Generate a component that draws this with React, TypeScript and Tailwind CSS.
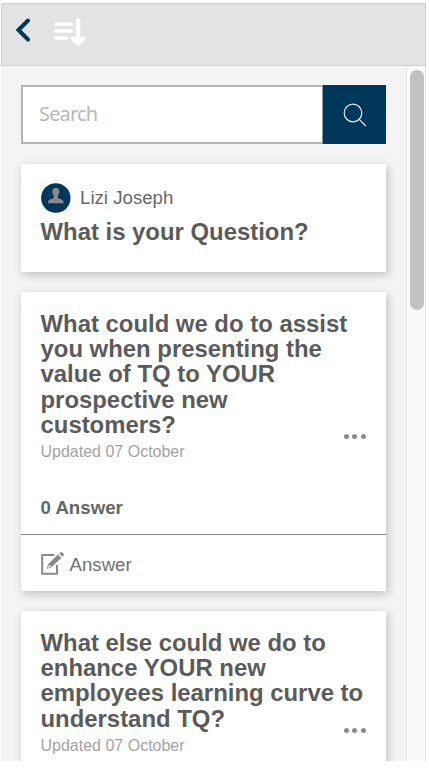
type Question = {
  title: string;
  updated: string;
  answers?: number;
};

const questions: Question[] = [
  {
    title:
      "What could we do to assist you when presenting the value of TQ to YOUR prospective new customers?",
    updated: "Updated 07 October",
    answers: 0,
  },
  {
    title:
      "What else could we do to enhance YOUR new employees learning curve to understand TQ?",
    updated: "Updated 07 October",
  },
];

function BackIcon() {
  return (
    <svg width="18" height="26" viewBox="0 0 18 26" fill="none" stroke="#00375b">
      <path d="M14 3.500L4.500 13l9.500 9.500" strokeWidth="4" strokeLinecap="round" />
    </svg>
  );
}

function SortIcon() {
  return (
    <svg width="32" height="30" viewBox="0 0 32 30" fill="none" stroke="#fff" strokeLinecap="round">
      <path d="M2 6.300h15.500M2 13h15.500M2 20h10.500" strokeWidth="3.400" />
      <path d="M24 2.500v21M19 20.500l5 4.800 5-4.800" strokeWidth="4.400" strokeLinejoin="round" />
    </svg>
  );
}

function SearchIcon() {
  return (
    <svg width="24" height="24" viewBox="0 0 24 24" fill="none" stroke="#e6ebf0" strokeWidth="1.200">
      <circle cx="10" cy="10" r="8.800" />
      <path d="M16.200 16.400l6.600 6.600" />
    </svg>
  );
}

function Avatar() {
  return (
    <svg className="shrink-0" width="30" height="30" viewBox="0 0 30 30">
      <circle cx="14.800" cy="15" r="14.700" fill="#00375b" />
      <path
        d="M14.800 5c-2.600 0-3.700 1.600-3.500 3.900.1 1.900.8 3.100 1.500 3.900v1.700c-.3.8-1.200 1.100-2.600 1.500-2.200.6-3.200 1.300-3.200 4.300h15.600c0-3-1-3.700-3.200-4.300-1.400-.4-2.300-.7-2.600-1.500v-1.700c.7-.8 1.400-2 1.500-3.900C18.500 6.600 17.400 5 14.800 5z"
        fill="#8d8989"
      />
    </svg>
  );
}

function EditIcon() {
  return (
    <svg width="24" height="25" viewBox="0 0 24 25" fill="none">
      <path d="M13.500 4H1.200V22.800H16V14" stroke="#8d8989" strokeWidth="2" />
      <path d="M5.800 18l1.400-5L17 3.600l3.400 3.500L10.400 16.300z" fill="#8d8989" />
      <path d="M7 16.700l.9-2.900 1.900 1.900z" fill="#fff" />
      <path d="M18.200 2.500l1-1c1.400-1.300 4.600 1.400 3.300 3.300l-1 1z" fill="#8d8989" />
    </svg>
  );
}

function MoreButton() {
  return (
    <button type="button" aria-label="More" className="absolute -top-2 right-0 flex gap-[3.400px]">
      <span className="size-[5.200px] rounded-full bg-[#8d8989]" />
      <span className="size-[5.200px] rounded-full bg-[#8d8989]" />
      <span className="size-[5.200px] rounded-full bg-[#8d8989]" />
    </button>
  );
}

function QuestionCard({ question }: { question: Question }) {
  return (
    <article className="mt-5 h-[299px] shrink-0 bg-white shadow-[2px_3px_9px_rgba(0,0,0,0.22)]">
      <div className="flex h-[243px] flex-col border-b border-[#8d8989] pt-[19px] pr-5 pl-[19.500px]">
        <h2 className="text-[23.900px] leading-[25.200px] font-bold text-[#5b5b5b]">{question.title}</h2>
        <div className="relative mt-[5px]">
          <p className="text-base leading-5 text-[#a3a3a3]">{question.updated}</p>
          <MoreButton />
        </div>
        {question.answers !== undefined ? (
          <p className="mt-auto mb-4 text-[18.670px] leading-5 font-bold text-[#666]">
            {question.answers} Answer
          </p>
        ) : null}
      </div>
      {question.answers !== undefined ? (
        <div className="flex h-14 items-center gap-[5px] px-[19.500px] text-[18.670px] text-[#707070]">
          <EditIcon />
          <span className="pt-1">Answer</span>
        </div>
      ) : null}
    </article>
  );
}

export default function App() {
  return (
    <div className="h-[768px] w-[429px] overflow-hidden bg-white pt-[3px] pl-px font-['Liberation_Sans',Arial,sans-serif]">
      <div className="flex h-[758px] w-[425px] flex-col overflow-hidden">
        <header className="flex h-[63px] shrink-0 border border-[#cecece] bg-[#e3e3e3]">
          <button type="button" aria-label="Back" className="mt-[13px] ml-[12px] h-[26px]">
            <BackIcon />
          </button>
          <div className="mt-[14px] ml-[22px]">
            <SortIcon />
          </div>
        </header>
        <div className="flex min-h-0 flex-1">
          <main className="flex min-h-0 flex-1 flex-col overflow-hidden bg-[#f4f4f4] px-5 pt-[19px]">
            <div className="flex h-[59px] shrink-0">
              <div className="flex-1 border-2 border-r-0 border-[#b4b4b4] bg-white pl-4 font-['Noto_Sans','Open_Sans',sans-serif] text-[20px] leading-[54px] tracking-[-0.850px] text-[#b8b8b8]">
                Search
              </div>
              <button
                type="button"
                aria-label="Search"
                className="flex w-[64px] items-center justify-center border-l-[1.500px] border-[#8797a3] bg-[#00375b]"
              >
                <SearchIcon />
              </button>
            </div>
            <article className="mt-5 h-[108px] shrink-0 bg-white pt-[19px] pr-5 pl-[19.500px] shadow-[2px_3px_9px_rgba(0,0,0,0.22)]">
              <div className="flex items-center gap-[9.500px] text-[18.670px] text-[#686868]">
                <Avatar />
                <span>Lizi Joseph</span>
              </div>
              <h1 className="mt-[6px] text-[23.900px] leading-[25px] font-bold text-[#5b5b5b]">
                What is your Question?
              </h1>
            </article>
            {questions.map((question) => (
              <QuestionCard key={question.title} question={question} />
            ))}
          </main>
          <div className="w-5 shrink-0 border-x border-[#e6e6e6] bg-[#fafafa] pt-1 pl-[3px]">
            <div className="h-[240px] w-[14px] rounded-full bg-[#c1c1c1]" />
          </div>
        </div>
      </div>
    </div>
  );
}
